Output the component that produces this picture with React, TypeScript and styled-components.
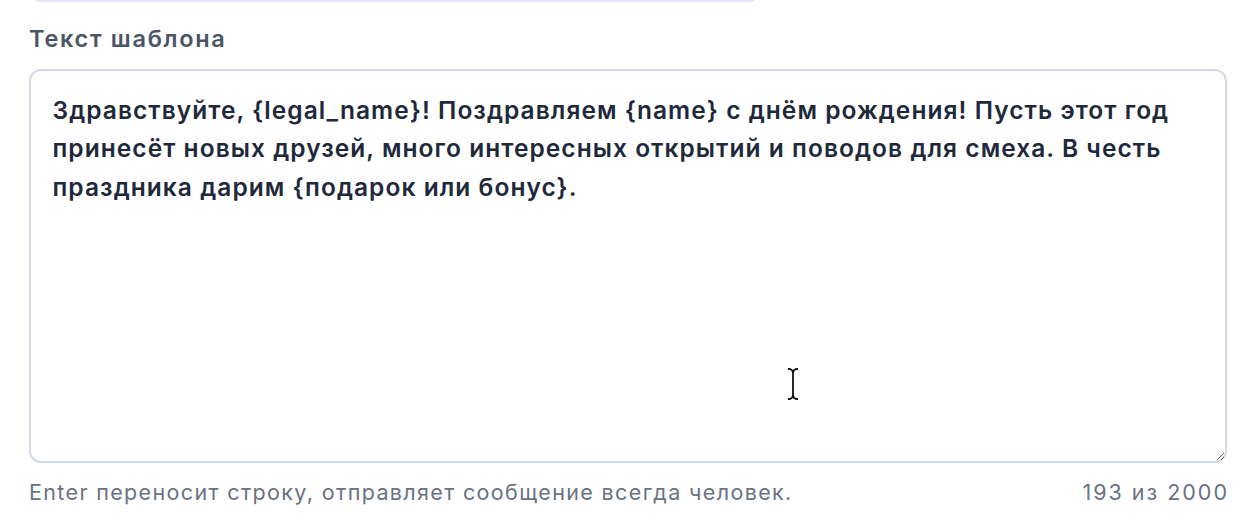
import styled, { createGlobalStyle } from "styled-components";

const GlobalStyle = createGlobalStyle`
  body {
    margin: 0;
    background: #ffffff;
    font-family: Inter, "Noto Sans", sans-serif;
  }
`;

const Page = styled.main`
  position: relative;
  width: 1260px;
  height: 520px;
  overflow: hidden;
  padding: 0 33px 0 29px;
  box-sizing: border-box;
`;

const PrevField = styled.div`
  width: 732px;
  height: 24px;
  margin-top: -22px;
  border: 2px solid #e3e6fb;
  border-radius: 14px;
  box-sizing: border-box;
`;

const Label = styled.label`
  display: block;
  margin-top: 22px;
  font-size: 23.5px;
  line-height: 30px;
  font-weight: 600;
  letter-spacing: 1.7px;
  color: #4a5567;
`;

const Field = styled.textarea`
  display: block;
  width: 100%;
  height: 394px;
  margin-top: 15px;
  padding: 19.5px 21.5px;
  box-sizing: border-box;
  border: 2px solid #d3dae4;
  border-radius: 12px;
  font-family: Inter, "Noto Sans", sans-serif;
  font-size: 24.5px;
  line-height: 38.5px;
  font-weight: 600;
  color: #1e293b;
  letter-spacing: 1.05px;
  resize: vertical;
  outline: none;
  background: #ffffff;
`;

const Footer = styled.div`
  display: flex;
  justify-content: space-between;
  align-items: center;
  margin-top: 16px;
  font-size: 21.5px;
  line-height: 26px;
  color: #6b7280;
`;

const Hint = styled.span`
  letter-spacing: 1.35px;
`;

const Counter = styled.span`
  letter-spacing: 2px;
  margin-right: -2px;
`;

const Cursor = styled.svg`
  position: absolute;
  left: 785px;
  top: 367px;
  pointer-events: none;
`;

const text =
  "Здравствуйте, {legal_name}! Поздравляем {name} с днём рождения! Пусть этот год принесёт новых друзей, много интересных открытий и поводов для смеха. В честь праздника дарим {подарок или бонус}.";

export default function App() {
  return (
    <>
      <GlobalStyle />
      <Page>
        <PrevField />
        <Label htmlFor="template">Текст шаблона</Label>
        <Field id="template" defaultValue={text} maxLength={2000} />
        <Footer>
          <Hint>Enter переносит строку, отправляет сообщение всегда человек.</Hint>
          <Counter>{text.length} из 2000</Counter>
        </Footer>
        <Cursor width="16" height="34" viewBox="0 0 16 34">
          <path
            d="M3 2 L5 2 Q8 3 8 6 L8 28 Q8 31 5 32 L3 32 M13 2 L11 2 Q8 3 8 6 M8 28 Q8 31 11 32 L13 32"
            fill="none"
            stroke="#111"
            strokeWidth="1.8"
          />
        </Cursor>
      </Page>
    </>
  );
}
